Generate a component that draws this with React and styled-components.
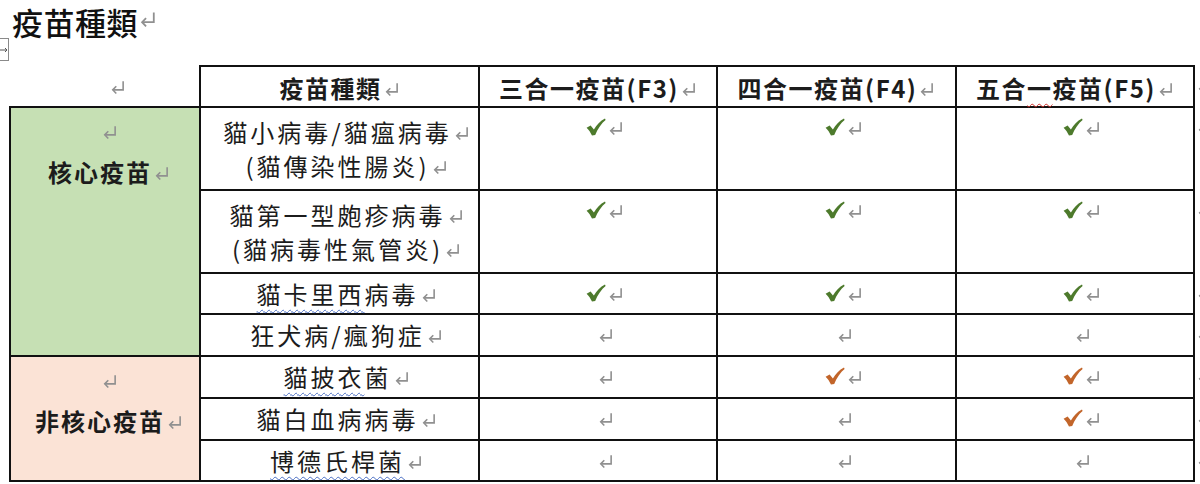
import React from "react";
import styled, { createGlobalStyle } from "styled-components";

const GlobalStyle = createGlobalStyle`
  html, body {
    margin: 0;
    padding: 0;
    background: #fff;
    overflow: hidden;
  }
  body {
    width: 1200px;
    height: 484px;
    font-family: "Noto Sans CJK TC", "Noto Sans", sans-serif;
    color: #1a1a1a;
  }
`;

const GREEN = "#4d7a2c";
const ORANGE = "#c2652a";

const rows = [
  { name: [[{ t: "貓小病毒/貓瘟病毒" }], [{ t: "(貓傳染性腸炎)" }]], checks: ["g", "g", "g"] },
  { name: [[{ t: "貓第一型皰疹病毒" }], [{ t: "(貓病毒性氣管炎)" }]], checks: ["g", "g", "g"] },
  { name: [[{ t: "貓卡里西", sq: true }, { t: "病毒" }]], checks: ["g", "g", "g"] },
  { name: [[{ t: "狂犬病/瘋狗症" }]], checks: [null, null, null] },
  { name: [[{ t: "貓披衣", sq: true }, { t: "菌" }]], checks: [null, "o", "o"] },
  { name: [[{ t: "貓白血病病毒" }]], checks: [null, null, "o"] },
  { name: [[{ t: "博德氏桿菌", sq: true }]], checks: [null, null, null] },
];

const groups = {
  0: { label: "核心疫苗", span: 4, bg: "#c6e0b4" },
  4: { label: "非核心疫苗", span: 3, bg: "#fbe3d6" },
};

const rowHeights = [83, 83, 41, 42, 42, 42, 41];

function ParaMark({ size = 16 }) {
  return (
    <MarkSvg width={size} height={size} viewBox="0 0 14 14">
      <path d="M11.5 2 V9.5 H2.5" fill="none" stroke="#909090" strokeWidth="1.4" />
      <path d="M5.5 6.3 L2.4 9.5 L5.5 12.7" fill="none" stroke="#909090" strokeWidth="1.4" />
    </MarkSvg>
  );
}

function Check({ color }) {
  return (
    <CheckSvg width="20" height="18" viewBox="0 0 20 18">
      <path
        d="M0.6 9.8 L4.6 7.4 L7.9 11.6 C10.6 7 14.2 3 19 0.6 L19.6 1.9 C15.6 5.2 11.6 10.6 9.2 17 L6 17.6 C4.6 14.6 2.9 12 0.6 9.8 Z"
        fill={color}
      />
    </CheckSvg>
  );
}

export default function App() {
  return (
    <Page>
      <GlobalStyle />
      <Title>
        疫苗種類
        <ParaMark size={18} />
      </Title>
      <MoveHandle>
        <svg width="8" height="8" viewBox="0 0 8 8">
          <path d="M0 4 H7 M5 2 L7 4 L5 6" fill="none" stroke="#555" strokeWidth="1" />
        </svg>
      </MoveHandle>
      <Table>
        <colgroup>
          <col style={{ width: 190 }} />
          <col style={{ width: 279 }} />
          <col style={{ width: 238 }} />
          <col style={{ width: 239 }} />
          <col style={{ width: 238 }} />
          <col style={{ width: 20 }} />
        </colgroup>
        <tbody>
          <tr style={{ height: 41 }}>
            <CornerCell>
              <ParaMark />
            </CornerCell>
            {["疫苗種類", "三合一疫苗(F3)", "四合一疫苗(F4)", null].map((h, i) => (
              <HeadCell key={i}>
                {h}
                {h === null && (
                  <>
                    五合<Squiggle $color="#d0302a">一</Squiggle>疫苗(F5)
                  </>
                )}
                <ParaMark />
              </HeadCell>
            ))}
            <EdgeCell>
              <ParaMark />
            </EdgeCell>
          </tr>
          {rows.map((r, i) => (
            <tr key={i} style={{ height: rowHeights[i] }}>
              {groups[i] && (
                <GroupCell rowSpan={groups[i].span} $bg={groups[i].bg}>
                  <Line>
                    <ParaMark />
                  </Line>
                  <Line>
                    {groups[i].label}
                    <ParaMark />
                  </Line>
                </GroupCell>
              )}
              <NameCell>
                {r.name.map((line, j) => (
                  <Line key={j}>
                    {line.map((p, k) =>
                      p.sq ? (
                        <Squiggle key={k} $color="#4b6fc4">
                          {p.t}
                        </Squiggle>
                      ) : (
                        <span key={k}>{p.t}</span>
                      )
                    )}
                    <ParaMark />
                  </Line>
                ))}
              </NameCell>
              {r.checks.map((c, j) => (
                <CheckCell key={j}>
                  {c && <Check color={c === "g" ? GREEN : ORANGE} />}
                  <ParaMark />
                </CheckCell>
              ))}
              <EdgeCell>
                <ParaMark />
              </EdgeCell>
            </tr>
          ))}
        </tbody>
      </Table>
    </Page>
  );
}

const Page = styled.div`
  position: relative;
  width: 1200px;
  height: 484px;
  overflow: hidden;
`;

const Title = styled.div`
  display: flex;
  align-items: center;
  padding-left: 12px;
  height: 44px;
  font-size: 31px;
  line-height: 44px;
  font-weight: 500;
  letter-spacing: 0.5px;
  color: #111;

  svg {
    margin-left: 1px;
    margin-top: -6px;
  }
`;

const MoveHandle = styled.div`
  position: absolute;
  left: 0;
  top: 38px;
  width: 8px;
  height: 21px;
  border: 1px solid #8a8a8a;
  border-left: none;
  display: flex;
  align-items: center;
  overflow: hidden;
`;

const Table = styled.table`
  margin: 21px 0 0 9px;
  width: 1204px;
  table-layout: fixed;
  border-collapse: collapse;
  font-family: "Noto Sans CJK TC", "Noto Sans", sans-serif;
  color: #1c1c1c;

  td {
    border: 2px solid #111;
    padding: 0;
  }
`;

const MarkSvg = styled.svg`
  display: inline-block;
  vertical-align: middle;
  margin-left: 2px;
  margin-top: -4px;
`;

const CheckSvg = styled.svg`
  display: inline-block;
  vertical-align: middle;
  margin-top: -5px;
`;

const CornerCell = styled.td`
  && {
    border-top: none;
    border-left: none;
    padding-left: 24px;
  }
  text-align: center;
  vertical-align: middle;
`;

const HeadCell = styled.td`
  text-align: center;
  vertical-align: middle;
  font-size: 24px;
  font-weight: 700;
  letter-spacing: 1.5px;
  white-space: nowrap;
  && {
    padding-top: 2px;
  }
`;

const EdgeCell = styled.td`
  && {
    border: none;
    padding-left: 0;
  }
  vertical-align: top;
  line-height: 38px;
`;

const GroupCell = styled.td`
  background: ${(p) => p.$bg};
  vertical-align: top;
  text-align: center;
  font-size: 24px;
  font-weight: 700;
  letter-spacing: 2px;
  line-height: 41px;
  && {
    padding-top: 2px;
    padding-left: 8px;
  }
`;

const NameCell = styled.td`
  text-align: center;
  vertical-align: middle;
  font-size: 24px;
  font-weight: 400;
  letter-spacing: 3px;
  line-height: 34px;
  white-space: nowrap;
  && {
    padding-left: 14px;
  }
`;

const Line = styled.div`
  display: block;
`;

const CheckCell = styled.td`
  text-align: center;
  vertical-align: top;
  line-height: 38px;
  && {
    padding-left: 14px;
  }
`;

const Squiggle = styled.span`
  text-decoration: underline wavy ${(p) => p.$color};
  text-decoration-thickness: 1px;
  text-underline-offset: 5px;
`;
